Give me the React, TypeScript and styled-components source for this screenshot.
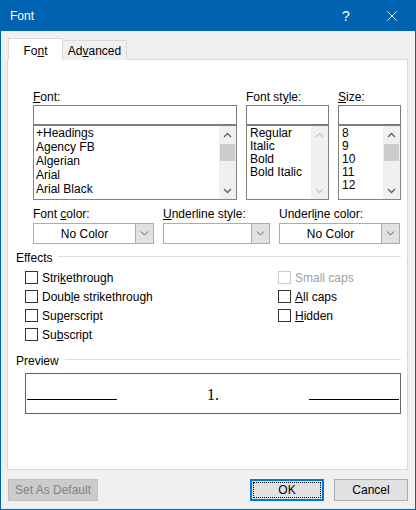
import React from "react";
import styled, { createGlobalStyle } from "styled-components";

const GlobalStyle = createGlobalStyle`
  html, body {
    margin: 0;
    padding: 0;
    background: #f0f0f0;
  }
  body {
    font-family: "Liberation Sans", Arial, sans-serif;
    font-size: 12px;
    color: #000;
  }
`;

const Window = styled.div`
  width: 416px;
  height: 510px;
  box-sizing: border-box;
  display: flex;
  flex-direction: column;
  background: #f0f0f0;
  border: 1px solid #0063b1;
  border-top: none;
`;

const TitleBar = styled.div`
  height: 31px;
  flex: none;
  display: flex;
  align-items: center;
  background: #0063b1;
  color: #fff;
`;

const Title = styled.div`
  flex: 1;
  padding-left: 9px;
  font-size: 12px;
`;

const CaptionButton = styled.div`
  width: 46px;
  height: 31px;
  display: flex;
  align-items: center;
  justify-content: center;
  font-size: 14px;
  color: #fff;
`;

const Body = styled.div`
  flex: 1;
  display: flex;
  flex-direction: column;
  padding: 7px 7px 8px 6px;
  min-height: 0;
`;

const TabStrip = styled.div`
  display: flex;
  align-items: flex-end;
  height: 22px;
  padding-left: 1px;
  margin-bottom: -1px;
`;

const Tab = styled.div<{ $active?: boolean; $w: number }>`
  box-sizing: border-box;
  width: ${(p) => p.$w}px;
  height: ${(p) => (p.$active ? 22 : 20)}px;
  display: flex;
  align-items: flex-end;
  justify-content: center;
  padding-bottom: 1px;
  line-height: 16px;
  background: ${(p) => (p.$active ? "#fff" : "#f0f0f0")};
  border: 1px solid #d9d9d9;
  border-bottom: none;
  border-left: ${(p) => (p.$active ? "1px solid #d9d9d9" : "none")};
  position: relative;
  z-index: ${(p) => (p.$active ? 1 : 0)};
`;

const Panel = styled.div`
  flex: 1;
  background: #fff;
  border: 1px solid #d9d9d9;
  display: flex;
  flex-direction: column;
`;

const Key = styled.span`
  text-decoration: underline;
  text-underline-offset: 1px;
`;

const FieldLabel = styled.div`
  line-height: 16px;
  white-space: nowrap;
`;

const FontGrid = styled.div`
  display: grid;
  grid-template-columns: 204px 83px 63px;
  column-gap: 9px;
  margin-top: 29px;
  padding-left: 25px;
`;

const Column = styled.div`
  display: flex;
  flex-direction: column;
`;

const TextBox = styled.div`
  box-sizing: border-box;
  height: 20px;
  border: 1px solid #7a7a7a;
  background: #fff;
`;

const ListBox = styled.div`
  box-sizing: border-box;
  height: 74px;
  border: 1px solid #828282;
  border-top: none;
  display: flex;
  background: #fff;
`;

const ListBorderTop = styled.div`
  height: 1px;
  background: #828282;
`;

const ListItems = styled.div<{ $pitch: number; $padX: number; $padTop: number }>`
  flex: 1;
  overflow: hidden;
  padding: ${(p) => p.$padTop}px 0 0 ${(p) => p.$padX}px;
  line-height: ${(p) => p.$pitch}px;
  white-space: nowrap;
`;

const ScrollBar = styled.div`
  width: 17px;
  display: flex;
  flex-direction: column;
  background: #f0f0f0;
`;

const ScrollArrow = styled.div`
  height: 17px;
  flex: none;
  display: flex;
  align-items: center;
  justify-content: center;
`;

const ScrollTrack = styled.div`
  flex: 1;
  padding-top: 1px;
`;

const ScrollThumb = styled.div`
  height: 17px;
  margin: 0 1px;
  background: #cdcdcd;
`;

const ComboGrid = styled.div`
  display: grid;
  grid-template-columns: 121px 107px 121px;
  column-gap: 9px;
  margin-top: 6px;
  padding-left: 25px;
`;

const ComboLabel = styled(FieldLabel)`
  margin-bottom: 1px;
`;

const Combo = styled.div`
  box-sizing: border-box;
  height: 21px;
  display: flex;
  border: 1px solid #adadad;
  background: #fff;
`;

const ComboValue = styled.div`
  flex: 1;
  display: flex;
  align-items: center;
  justify-content: center;
  line-height: 16px;
`;

const ComboButton = styled.div`
  width: 17px;
  display: flex;
  align-items: center;
  justify-content: center;
  background: #e1e1e1;
  border-left: 1px solid #adadad;
`;

const GroupHeader = styled.div<{ $top: number }>`
  display: flex;
  align-items: flex-start;
  margin-top: ${(p) => p.$top}px;
  padding: 0 6px 0 8px;
  line-height: 16px;
`;

const GroupRule = styled.div`
  flex: 1;
  height: 1px;
  margin: 6px 0 0 6px;
  background: #dcdcdc;
`;

const EffectsGrid = styled.div`
  display: grid;
  grid-template-columns: 253px 1fr;
  margin-top: 2px;
  padding-left: 17px;
`;

const CheckRow = styled.div`
  height: 19px;
  display: flex;
  align-items: center;
  gap: 4px;
`;

const CheckBox = styled.div<{ $disabled?: boolean }>`
  box-sizing: border-box;
  width: 13px;
  height: 13px;
  background: #fff;
  border: 1px solid ${(p) => (p.$disabled ? "#cccccc" : "#333333")};
`;

const CheckText = styled.span<{ $disabled?: boolean }>`
  color: ${(p) => (p.$disabled ? "#a0a0a0" : "#000")};
  line-height: 16px;
`;

const PreviewBox = styled.div`
  box-sizing: border-box;
  width: 376px;
  height: 41px;
  margin: 4px 0 0 17px;
  border: 1px solid #646464;
  display: flex;
  flex-direction: column;
  justify-content: flex-end;
  padding: 0 1px 10px;
`;

const PreviewRow = styled.div`
  display: flex;
  align-items: baseline;
  justify-content: space-between;
`;

const PreviewRule = styled.div<{ $w: number }>`
  width: ${(p) => p.$w}px;
  height: 0;
  border-bottom: 1px solid #000;
`;

const PreviewText = styled.span`
  font-family: "Liberation Serif", "Times New Roman", serif;
  font-size: 16px;
  line-height: 16px;
`;

const ButtonBar = styled.div`
  display: flex;
  gap: 10px;
  margin-top: 9px;
  padding-left: 1px;
`;

const Spacer = styled.div`
  flex: 1;
`;

const DialogButton = styled.div<{ $w: number; $kind?: "default" | "disabled" }>`
  box-sizing: border-box;
  width: ${(p) => p.$w}px;
  height: 22px;
  display: flex;
  align-items: stretch;
  justify-content: center;
  padding: ${(p) => (p.$kind === "default" ? "1px" : "0")};
  background: ${(p) => (p.$kind === "disabled" ? "#cccccc" : "#e1e1e1")};
  color: ${(p) => (p.$kind === "disabled" ? "#838383" : "#000")};
  border: ${(p) =>
    p.$kind === "default"
      ? "2px solid #0078d7"
      : p.$kind === "disabled"
      ? "1px solid #bfbfbf"
      : "1px solid #adadad"};
`;

const ButtonFace = styled.div<{ $focus?: boolean }>`
  flex: 1;
  display: flex;
  align-items: center;
  justify-content: center;
  line-height: 16px;
  border: 1px ${(p) => (p.$focus ? "dotted #000" : "solid transparent")};
`;

const Chevron: React.FC<{ up?: boolean; color: string }> = ({ up, color }) => (
  <svg width="9" height="6" viewBox="0 0 9 6">
    <path
      d={up ? "M1 5 L4.5 1.5 L8 5" : "M1 1 L4.5 4.5 L8 1"}
      fill="none"
      stroke={color}
      strokeWidth="1.3"
    />
  </svg>
);

const Scroller: React.FC<{ disabled?: boolean }> = ({ disabled }) => {
  const c = disabled ? "#c8c8c8" : "#606060";
  return (
    <ScrollBar>
      <ScrollArrow>
        <Chevron up color={c} />
      </ScrollArrow>
      <ScrollTrack>{!disabled && <ScrollThumb />}</ScrollTrack>
      <ScrollArrow>
        <Chevron color={c} />
      </ScrollArrow>
    </ScrollBar>
  );
};

const PickerColumn: React.FC<{
  label: React.ReactNode;
  items: string[];
  pitch: number;
  padX: number;
  padTop: number;
  disabledScroll?: boolean;
}> = ({ label, items, pitch, padX, padTop, disabledScroll }) => (
  <Column>
    <FieldLabel>{label}</FieldLabel>
    <TextBox />
    <ListBorderTop />
    <ListBox>
      <ListItems $pitch={pitch} $padX={padX} $padTop={padTop}>
        {items.map((it) => (
          <div key={it}>{it}</div>
        ))}
      </ListItems>
      <Scroller disabled={disabledScroll} />
    </ListBox>
  </Column>
);

const ComboField: React.FC<{ label: React.ReactNode; value?: string }> = ({
  label,
  value,
}) => (
  <Column>
    <ComboLabel>{label}</ComboLabel>
    <Combo>
      <ComboValue>{value}</ComboValue>
      <ComboButton>
        <svg width="9" height="5" viewBox="0 0 9 5">
          <path d="M1 0.5 L4.5 4 L8 0.5" fill="none" stroke="#606060" strokeWidth="1" />
        </svg>
      </ComboButton>
    </Combo>
  </Column>
);

const Check: React.FC<{ children: React.ReactNode; disabled?: boolean }> = ({
  children,
  disabled,
}) => (
  <CheckRow>
    <CheckBox $disabled={disabled} />
    <CheckText $disabled={disabled}>{children}</CheckText>
  </CheckRow>
);

export default function App() {
  return (
    <>
      <GlobalStyle />
      <Window>
        <TitleBar>
          <Title>Font</Title>
          <CaptionButton>?</CaptionButton>
          <CaptionButton>
            <svg width="10" height="10" viewBox="0 0 10 10">
              <path d="M0.5 0.5 L9.5 9.5 M9.5 0.5 L0.5 9.5" stroke="#fff" strokeWidth="1" />
            </svg>
          </CaptionButton>
        </TitleBar>
        <Body>
          <TabStrip>
            <Tab $active $w={55}>
              <span>
                Fo<Key>n</Key>t
              </span>
            </Tab>
            <Tab $w={64}>
              <span>
                Ad<Key>v</Key>anced
              </span>
            </Tab>
          </TabStrip>
          <Panel>
            <FontGrid>
              <PickerColumn
                label={
                  <>
                    <Key>F</Key>ont:
                  </>
                }
                items={["+Headings", "Agency FB", "Algerian", "Arial", "Arial Black"]}
                pitch={14}
                padX={2}
                padTop={0}
              />
              <PickerColumn
                label={
                  <>
                    Font st<Key>y</Key>le:
                  </>
                }
                items={["Regular", "Italic", "Bold", "Bold Italic"]}
                pitch={13}
                padX={3}
                padTop={1}
                disabledScroll
              />
              <PickerColumn
                label={
                  <>
                    <Key>S</Key>ize:
                  </>
                }
                items={["8", "9", "10", "11", "12"]}
                pitch={13}
                padX={3}
                padTop={1}
              />
            </FontGrid>

            <ComboGrid>
              <ComboField
                label={
                  <>
                    Font <Key>c</Key>olor:
                  </>
                }
                value="No Color"
              />
              <ComboField
                label={
                  <>
                    <Key>U</Key>nderline style:
                  </>
                }
              />
              <ComboField
                label={
                  <>
                    Underl<Key>i</Key>ne color:
                  </>
                }
                value="No Color"
              />
            </ComboGrid>

            <GroupHeader $top={6}>
              <span>Effects</span>
              <GroupRule />
            </GroupHeader>
            <EffectsGrid>
              <Column>
                <Check>
                  Stri<Key>k</Key>ethrough
                </Check>
                <Check>
                  Doub<Key>l</Key>e strikethrough
                </Check>
                <Check>
                  Su<Key>p</Key>erscript
                </Check>
                <Check>
                  Su<Key>b</Key>script
                </Check>
              </Column>
              <Column>
                <Check disabled>Small caps</Check>
                <Check>
                  <Key>A</Key>ll caps
                </Check>
                <Check>
                  <Key>H</Key>idden
                </Check>
              </Column>
            </EffectsGrid>

            <GroupHeader $top={9}>
              <span>Preview</span>
              <GroupRule />
            </GroupHeader>
            <PreviewBox>
              <PreviewRow>
                <PreviewRule $w={90} />
                <PreviewText>1.</PreviewText>
                <PreviewRule $w={90} />
              </PreviewRow>
            </PreviewBox>
          </Panel>
          <ButtonBar>
            <DialogButton $w={90} $kind="disabled">
              <ButtonFace>Set As Default</ButtonFace>
            </DialogButton>
            <Spacer />
            <DialogButton $w={74} $kind="default">
              <ButtonFace $focus>OK</ButtonFace>
            </DialogButton>
            <DialogButton $w={74}>
              <ButtonFace>Cancel</ButtonFace>
            </DialogButton>
          </ButtonBar>
        </Body>
      </Window>
    </>
  );
}
